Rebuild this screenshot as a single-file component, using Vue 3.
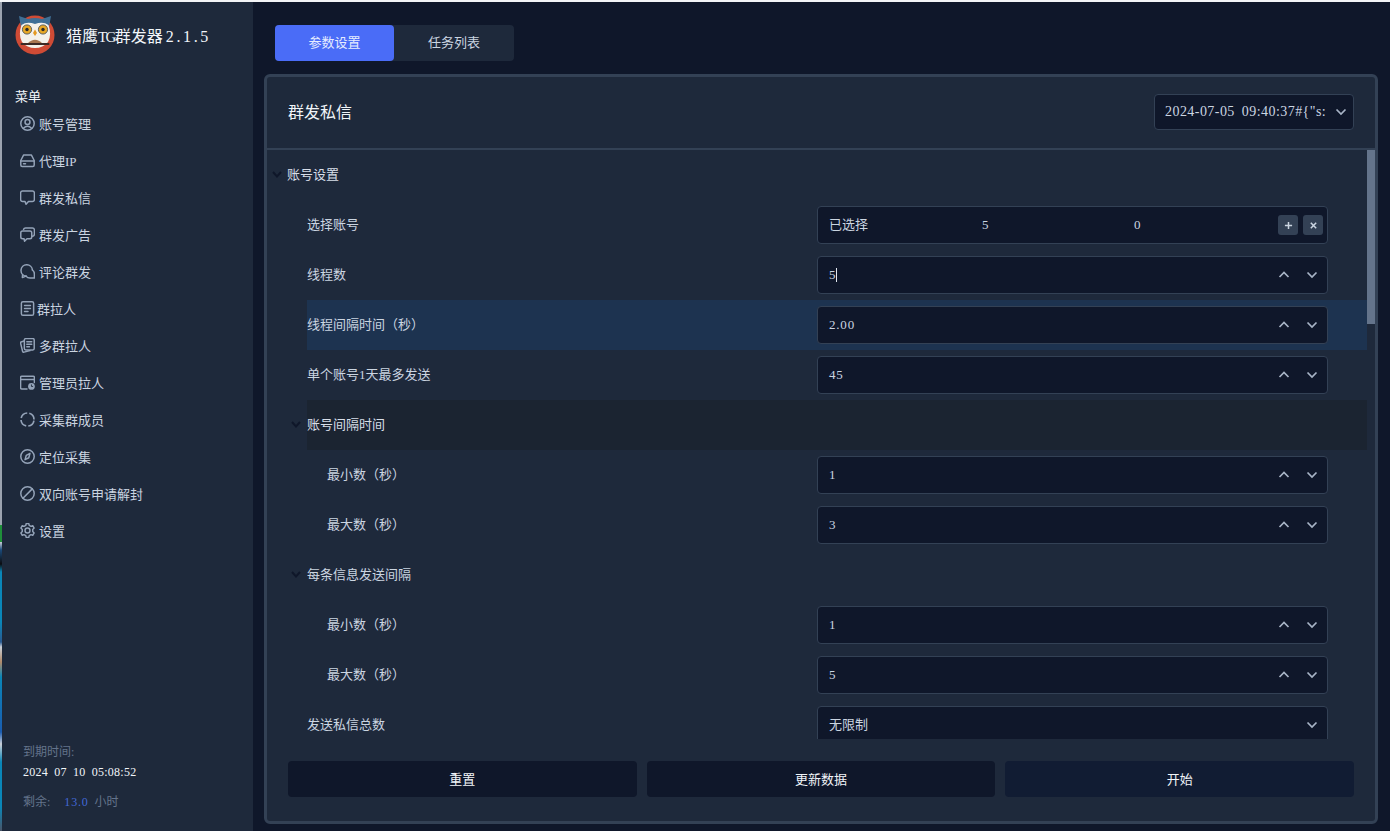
<script setup>
const menu = [
  { label: '账号管理', icon: 'user' },
  { label: '代理IP', icon: 'drive' },
  { label: '群发私信', icon: 'chat' },
  { label: '群发广告', icon: 'chats' },
  { label: '评论群发', icon: 'comment' },
  { label: '群拉人', icon: 'doc', tight: true },
  { label: '多群拉人', icon: 'docs' },
  { label: '管理员拉人', icon: 'calendar' },
  { label: '采集群成员', icon: 'target' },
  { label: '定位采集', icon: 'compass' },
  { label: '双向账号申请解封', icon: 'ban' },
  { label: '设置', icon: 'gear' }
]

const rows = [
  { label: '账号设置', level: 0, head: true },
  { label: '选择账号', level: 1, kind: 'pick' },
  { label: '线程数', level: 1, kind: 'num', value: '5', caret: true },
  { label: '线程间隔时间（秒）', level: 1, kind: 'num', value: '2.00', tone: 'active' },
  { label: '单个账号1天最多发送', level: 1, kind: 'num', value: '45' },
  { label: '账号间隔时间', level: 1, head: true, tone: 'hover' },
  { label: '最小数（秒）', level: 2, kind: 'num', value: '1' },
  { label: '最大数（秒）', level: 2, kind: 'num', value: '3' },
  { label: '每条信息发送间隔', level: 1, head: true },
  { label: '最小数（秒）', level: 2, kind: 'num', value: '1' },
  { label: '最大数（秒）', level: 2, kind: 'num', value: '5' },
  { label: '发送私信总数', level: 1, kind: 'select', value: '无限制' }
]

const actions = ['重置', '更新数据', '开始']
</script>

<template>
  <div class="shell">
    <div class="edge"></div>
    <aside class="side">
      <div class="brand">
        <svg class="logo" viewBox="0 0 40 40">
          <circle cx="20" cy="20" r="19.500" fill="#cf4b35" />
          <path d="M4 1 L13 4 Q20 2 27 4 L36 1 L34 12 L33 20 L7 20 L6 12 Z" fill="#3f6f96" />
          <path d="M20 9 Q12 6 6.500 10 Q3 20 7 27 Q12 33 20 33 Q28 33 33 27 Q37 20 33.500 10 Q28 6 20 9 Z" fill="#f4f1ea" />
          <circle cx="12" cy="14.500" r="4.600" fill="#e8a825" stroke="#3a4652" stroke-width="0.800" />
          <circle cx="28" cy="14.500" r="4.600" fill="#e8a825" stroke="#3a4652" stroke-width="0.800" />
          <circle cx="12" cy="14.500" r="1.700" fill="#2b2b2b" />
          <circle cx="28" cy="14.500" r="1.700" fill="#2b2b2b" />
          <path d="M20 14.500 L22 18 L20 21 L18 18 Z" fill="#e59a22" />
          <path d="M12.500 28.500 Q20 21 27.500 28.500 Z" fill="#a87650" />
          <rect x="5.500" y="28" width="29" height="2" rx="1" fill="#3d2a25" />
        </svg>
        <span class="brand-name">猎鹰<span class="brand-tg">TG</span>群发器<span class="brand-ver">2.1.5</span></span>
      </div>

      <div class="menu-title">菜单</div>
      <nav class="menu">
        <div v-for="item in menu" :key="item.label" class="menu-item">
          <svg class="menu-icon" viewBox="0.4 0.4 15.2 15.2" fill="none" stroke="currentColor" stroke-width="1.500" stroke-linecap="round" stroke-linejoin="round">
            <template v-if="item.icon === 'user'">
              <circle cx="8" cy="8" r="6.800" />
              <circle cx="8" cy="6.500" r="2.500" />
              <path d="M3.800 12.800 Q8 8.800 12.200 12.800" />
            </template>
            <template v-else-if="item.icon === 'drive'">
              <path d="M4 2.500 H12 L14.800 8 V12.500 Q14.800 14 13.300 14 H2.700 Q1.200 14 1.200 12.500 V8 Z" />
              <path d="M1.200 8.500 H14.800" />
              <path d="M4 11.200 H6" />
            </template>
            <path v-else-if="item.icon === 'chat'" d="M3 1.500 H13 Q15 1.500 15 3.500 V10 Q15 12 13 12 H9 L6.500 14.800 L5.500 12 H3 Q1 12 1 10 V3.500 Q1 1.500 3 1.500 Z" />
            <template v-else-if="item.icon === 'chats'">
              <path d="M3 4.500 H10.500 Q12.300 4.500 12.300 6.300 V10.500 Q12.300 12.300 10.500 12.300 H7.500 L5 14.800 L4.500 12.300 H3 Q1.200 12.300 1.200 10.500 V6.300 Q1.200 4.500 3 4.500 Z" />
              <path d="M4 2.800 Q4.500 1.500 6 1.500 H13 Q15 1.500 15 3.500 V7.500 Q15 9.800 12.800 9.800" />
            </template>
            <template v-else-if="item.icon === 'comment'">
              <path d="M6.500 12.700 A5.800 5.800 0 1 1 13 6.500" />
              <path d="M3 11.200 L2.800 14.200 L6.500 12.700" />
              <path d="M13 6.500 Q15 8 15 10.500 V14.700 H10.500 Q8 14.700 6.500 12.700" />
            </template>
            <template v-else-if="item.icon === 'doc'">
              <rect x="1.800" y="1.200" width="12.400" height="13.600" rx="1.600" />
              <path d="M5 5 H11 M5 8 H11 M5 11 H8.500" />
            </template>
            <template v-else-if="item.icon === 'docs'">
              <rect x="4.800" y="1" width="10" height="11.500" rx="1.400" />
              <path d="M7.300 4.300 H12.300 M7.300 6.800 H12.300 M7.300 9.300 H10" />
              <path d="M4.500 3.500 L1.500 4.500 Q0.800 4.800 1 5.600 L3 13.800 Q3.300 15 4.500 14.700 L10.500 13.200" />
            </template>
            <template v-else-if="item.icon === 'calendar'">
              <path d="M7.500 14.500 H2.200 Q1 14.500 1 13.300 V2.800 Q1 1.600 2.200 1.600 H13.800 Q15 1.600 15 2.800 V8" />
              <path d="M1 5 H15" />
              <circle cx="12" cy="12" r="3.400" fill="currentColor" stroke="none" />
              <path d="M12 10.400 V12 H13.300" stroke="#1e293b" stroke-width="0.900" />
            </template>
            <circle
              v-else-if="item.icon === 'target'"
              cx="8"
              cy="8"
              r="6.600"
              stroke-linecap="butt"
              stroke-width="1.700"
              stroke-dasharray="8.170 2.200"
              stroke-dashoffset="-1.100"
            />
            <template v-else-if="item.icon === 'compass'">
              <circle cx="8" cy="8" r="6.800" />
              <path d="M10.500 4.800 L9.300 9.300 L5.500 11.200 L6.800 6.800 Z" />
            </template>
            <template v-else-if="item.icon === 'ban'">
              <circle cx="8" cy="8" r="6.800" />
              <path d="M3.400 12.800 L12.800 3.300" />
            </template>
            <template v-else-if="item.icon === 'gear'">
              <circle cx="8" cy="8" r="2.500" />
              <path d="M6.700 1 H9.300 L9.800 2.900 L11.500 3.800 L13.300 3.100 L14.700 5.500 L13.300 6.900 V9.100 L14.700 10.500 L13.300 12.900 L11.500 12.200 L9.800 13.100 L9.300 15 H6.700 L6.200 13.100 L4.500 12.200 L2.700 12.900 L1.300 10.500 L2.700 9.100 V6.900 L1.300 5.500 L2.700 3.100 L4.500 3.800 L6.200 2.900 Z" />
            </template>
          </svg>
          <span :class="{ 'tight-label': item.tight }">{{ item.label }}</span>
        </div>
      </nav>

      <div class="expiry">
        <div class="expiry-label">到期时间:</div>
        <div class="expiry-date">2024 07 10 05:08:52</div>
        <div class="expiry-left">剩余:<b class="hours">13.0</b>小时</div>
      </div>
    </aside>

    <main class="main">
      <div class="tabs">
        <div class="tab tab-on">参数设置</div>
        <div class="tab">任务列表</div>
      </div>

      <section class="card">
        <header class="card-head">
          <h1 class="card-title">群发私信</h1>
          <div class="preset">
            <span class="preset-text">2024-07-05 09:40:37#{"s:</span>
            <svg class="chev chev-preset" viewBox="0 0 12 8"><path d="M1.500 1.500 L6 6 L10.500 1.500" /></svg>
          </div>
        </header>

        <div class="card-body">
          <div class="scroller">
            <div
              v-for="(row, i) in rows"
              :key="i"
              class="row"
              :class="['level-' + row.level, row.tone ? 'tone-' + row.tone : '']"
            >
              <div class="row-inner">
                <svg v-if="row.head" class="fold" viewBox="0 0 10 7"><path d="M1 1 L5 5.500 L9 1" /></svg>
                <span class="row-label">{{ row.label }}</span>

                <div v-if="row.kind === 'pick'" class="field field-pick">
                  <span class="pick-cell pick-name">已选择</span>
                  <span class="pick-cell">5</span>
                  <span class="pick-cell">0</span>
                  <span class="pick-btns">
                    <span class="mini">
                      <svg viewBox="0 0 10 10"><path d="M5 1 V9 M1 5 H9" /></svg>
                    </span>
                    <span class="mini">
                      <svg viewBox="0 0 10 10"><path d="M2 2 L8 8 M8 2 L2 8" /></svg>
                    </span>
                  </span>
                </div>

                <div v-else-if="row.kind === 'num'" class="field">
                  <span class="field-text field-num">{{ row.value }}<i v-if="row.caret" class="caret"></i></span>
                  <span class="steppers">
                    <svg class="chev" viewBox="0 0 12 8"><path d="M1.500 6 L6 1.500 L10.500 6" /></svg>
                    <svg class="chev" viewBox="0 0 12 8"><path d="M1.500 1.500 L6 6 L10.500 1.500" /></svg>
                  </span>
                </div>

                <div v-else-if="row.kind === 'select'" class="field">
                  <span class="field-text field-word">{{ row.value }}</span>
                  <svg class="chev" viewBox="0 0 12 8"><path d="M1.500 1.500 L6 6 L10.500 1.500" /></svg>
                </div>
              </div>
            </div>
          </div>
          <div class="scrollbar"><div class="thumb"></div></div>
        </div>

        <footer class="actions">
          <button v-for="(a, i) in actions" :key="a" class="action" :class="{ 'action-go': i === 2 }">{{ a }}</button>
        </footer>
      </section>
    </main>
  </div>
</template>

<style>
html, body {
  margin: 0;
  background: #0f172a;
  overflow: hidden;
}
</style>

<style scoped>
.shell {
  display: flex;
  width: 1390px;
  height: 831px;
  box-sizing: border-box;
  border-top: 2px solid #f3f4f6;
  overflow: hidden;
  background: #0f172a;
  font-family: "Liberation Serif", "Noto Sans CJK SC", serif;
  font-size: 13px;
  color: #dfe5ee;
}
.edge {
  flex: 0 0 2px;
  background: linear-gradient(
    to bottom,
    #9ca3af 0, #9ca3af 523px,
    #1f8f3a 523px, #1f8f3a 540px,
    #c9ced6 540px, #1a4a7a 548px,
    #0c0c10 562px, #0a86b8 570px,
    #0a86b8 620px, #2a5a90 640px,
    #c9ced6 645px, #b08a6a 660px,
    #0a86b8 675px, #1a5cb0 730px,
    #c9ced6 742px, #0a86b8 760px,
    #0a86b8 805px, #4a5568 829px
  );
}
.side {
  flex: 0 0 251px;
  display: flex;
  flex-direction: column;
  background: #1e293b;
  padding: 12px 0 0 13px;
  box-sizing: border-box;
}
.brand {
  display: flex;
  align-items: center;
  height: 42px;
}
.logo {
  width: 40px;
  height: 40px;
  flex: none;
}
.brand-name {
  margin-left: 11px;
  font-size: 16px;
  color: #f1f5f9;
}
.brand-tg {
  font-size: 15px;
  letter-spacing: -1.6px;
}
.brand-ver {
  margin-left: 3px;
  letter-spacing: 2.6px;
}
.menu-title {
  margin-top: 31px;
  line-height: 20px;
  color: #f1f5f9;
}
.menu {
  display: flex;
  flex-direction: column;
  margin-top: -2px;
  padding-left: 5px;
}
.menu-item {
  display: flex;
  align-items: center;
  height: 37px;
  gap: 4px;
  color: #cbd5e1;
}
.menu-icon {
  width: 15px;
  height: 15px;
  flex: none;
  color: #94a3b8;
}
.tight-label {
  margin-left: -2px;
}
.expiry {
  margin-top: auto;
  padding: 0 0 19px 8px;
  font-size: 12px;
}
.expiry-label {
  line-height: 20px;
  color: #64748b;
}
.expiry-date {
  line-height: 20px;
  color: #f1f5f9;
  word-spacing: 3px;
  letter-spacing: 0.25px;
}
.expiry-left {
  margin-top: 10px;
  line-height: 20px;
  color: #64748b;
}
.hours {
  margin: 0 6px 0 14px;
  font-weight: 400;
  letter-spacing: 0.8px;
  color: #4268d6;
}
.main {
  flex: 1;
  min-width: 0;
  display: flex;
  flex-direction: column;
  padding: 23px 12px 7px 11px;
  box-sizing: border-box;
}
.tabs {
  display: flex;
  margin-left: 11px;
  width: 239px;
  height: 36px;
  flex: none;
  border-radius: 4px;
  background: #1e293b;
}
.tab {
  flex: 1 1 120px;
  display: flex;
  align-items: center;
  justify-content: center;
  box-sizing: border-box;
  padding-bottom: 3px;
  color: #cbd5e1;
  border-radius: 4px;
}
.tab-on {
  flex: 0 0 119px;
  background: #4a6cf7;
  color: #e6ecff;
}
.card {
  flex: 1;
  min-height: 0;
  margin-top: 13px;
  display: flex;
  flex-direction: column;
  border: 3px solid #334155;
  border-radius: 6px;
  background: #1e293b;
  overflow: hidden;
}
.card-head {
  display: flex;
  align-items: center;
  justify-content: space-between;
  height: 73px;
  flex: none;
  box-sizing: border-box;
  padding: 0 21px 2px;
  border-bottom: 2px solid #334155;
}
.card-title {
  margin: 0 0 2px;
  font-size: 16px;
  font-weight: 400;
  color: #f1f5f9;
}
.preset {
  display: flex;
  align-items: center;
  width: 200px;
  height: 36px;
  box-sizing: border-box;
  padding: 0 6px 0 10px;
  background: #0f172a;
  border: 1px solid #334155;
  border-radius: 4px;
}
.preset-text {
  flex: 1;
  min-width: 0;
  overflow: hidden;
  white-space: nowrap;
  font-size: 14px;
  color: #cbd5e1;
  word-spacing: 3px;
  letter-spacing: 0.45px;
}
.chev {
  width: 12px;
  height: 8px;
  flex: none;
  fill: none;
  stroke: #a8b4c6;
  stroke-width: 1.700;
}
.chev-preset {
  margin-left: 5px;
}
.card-body {
  position: relative;
  flex: none;
  height: 589px;
  display: flex;
  overflow: hidden;
}
.scroller {
  flex: 0 0 1100px;
  height: 589px;
  overflow: hidden;
}
.scrollbar {
  flex: 0 0 8px;
  height: 100%;
}
.thumb {
  height: 174px;
  background: #64748b;
}
.row {
  height: 50px;
}
.row-inner {
  display: flex;
  align-items: center;
  position: relative;
  height: 100%;
  box-sizing: border-box;
}
.level-0 .row-inner {
  padding-left: 20px;
}
.level-1 .row-inner {
  margin-left: 40px;
}
.level-2 .row-inner {
  margin-left: 40px;
  padding-left: 20px;
}
.tone-active .row-inner {
  background: #1d3350;
}
.tone-hover .row-inner {
  background: #1b2431;
}
.fold {
  position: absolute;
  left: 5px;
  top: 21px;
  width: 10px;
  height: 7px;
  fill: none;
  stroke: #0f172a;
  stroke-width: 2;
}
.level-1 .fold {
  left: -16px;
}
.row-label {
  padding-bottom: 4px;
  color: #cbd5e1;
  white-space: nowrap;
}
.tone-hover .row-label,
.level-0 .row-label {
  color: #d8dfe9;
}
.field {
  position: absolute;
  left: 510px;
  top: 6px;
  display: flex;
  align-items: center;
  justify-content: space-between;
  width: 511px;
  height: 38px;
  box-sizing: border-box;
  padding: 0 9px 0 11px;
  background: #0f172a;
  border: 1px solid #334155;
  border-radius: 4px;
}
.field-text {
  display: flex;
  align-items: center;
  color: #cbd5e1;
}
.field-num {
  letter-spacing: 0.8px;
}
.field-word,
.pick-name {
  padding-bottom: 4px;
}
.caret {
  display: inline-block;
  width: 1px;
  height: 14px;
  background: #e2e8f0;
}
.steppers {
  display: flex;
  gap: 16px;
}
.field-pick {
  justify-content: flex-start;
  padding-right: 4px;
}
.pick-cell {
  flex: 0 0 153px;
  color: #cbd5e1;
}
.pick-cell:nth-child(2) {
  flex: 0 0 152px;
}
.pick-cell:nth-child(3) {
  flex: 0 0 144px;
}
.pick-btns {
  display: flex;
  gap: 5px;
}
.mini {
  display: flex;
  align-items: center;
  justify-content: center;
  width: 20px;
  height: 20px;
  border-radius: 3px;
  background: #334155;
}
.mini svg {
  width: 9px;
  height: 9px;
  fill: none;
  stroke: #cbd5e1;
  stroke-width: 1.700;
}
.actions {
  display: grid;
  grid-template-columns: repeat(3, 1fr);
  gap: 10px;
  padding: 22px 21px 0;
}
.action {
  height: 36px;
  border: 0;
  border-radius: 4px;
  padding: 0 0 2px;
  background: #0f172a;
  color: #f1f5f9;
  font: inherit;
}
.action-go {
  background: #111c33;
}
</style>
